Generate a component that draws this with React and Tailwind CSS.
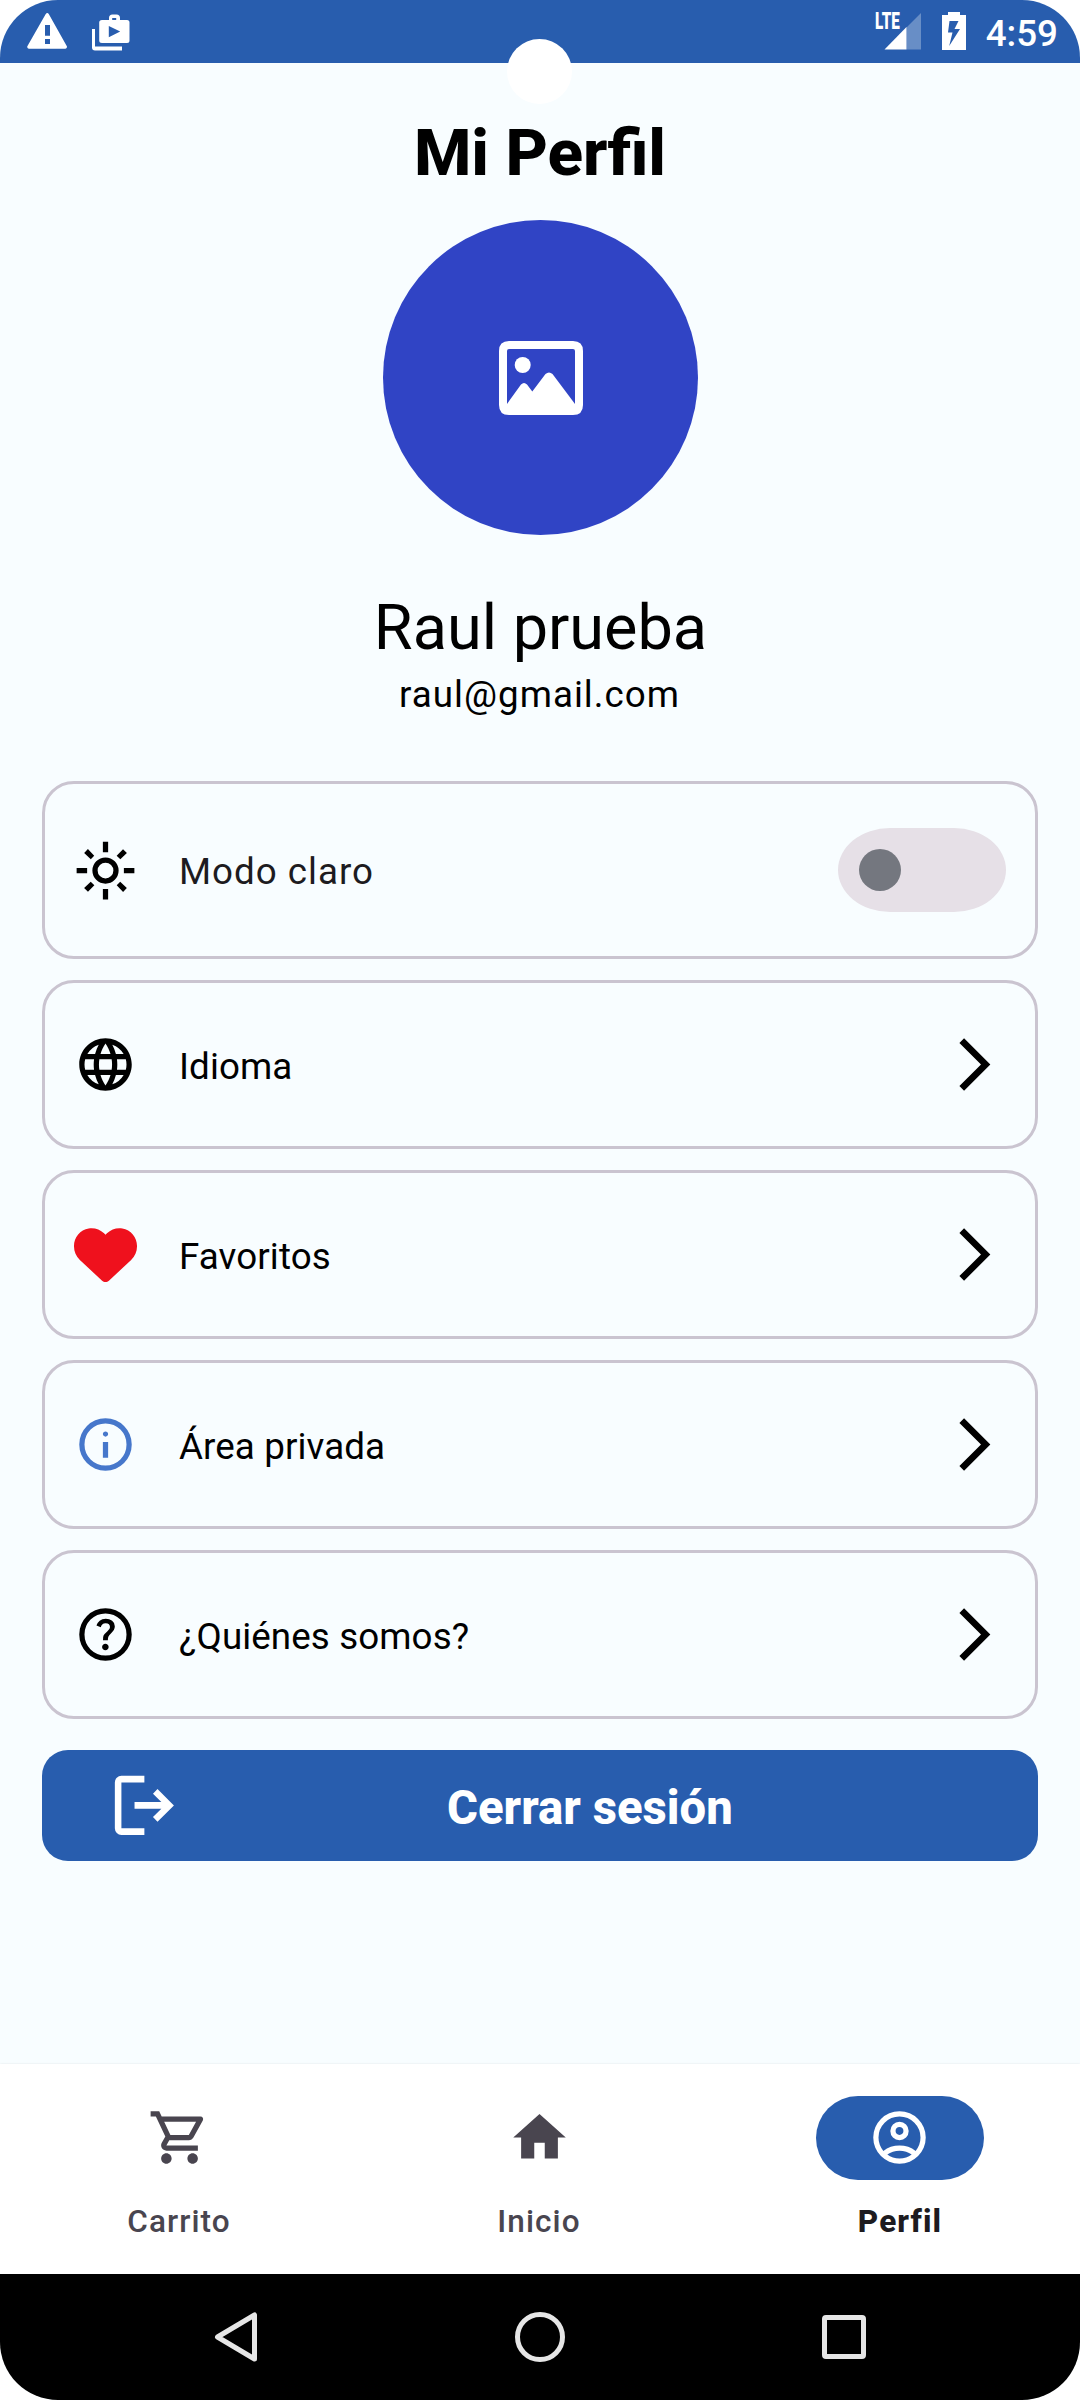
import React from "react";
import { MdLanguage, MdHome, MdOutlineShoppingCart } from "react-icons/md";
import { FaHeart } from "react-icons/fa6";

const PATHS = {
  sun: "M480-360q50 0 85-35t35-85-35-85-85-35-85 35-35 85 35 85 85 35Zm0 80q-83 0-141.5-58.5T280-480t58.5-141.5T480-680t141.5 58.5T680-480t-58.500 141.500T480-280ZM200-440H40v-80h160v80Zm720 0H760v-80h160v80ZM440-760v-160h80v160h-80Zm0 720v-160h80v160h-80ZM256-650l-101-97 57-59 96 100-52 56Zm492 496-97-101 53-55 101 97-57 59Zm-98-550 97-101 59 57-100 96-56-52ZM154-212l101-97 55 53-97 101-59-57Z",
  info: "M440-280h80v-240h-80v240Zm40-320q17 0 28.500-11.500T520-640q0-17-11.500-28.500T480-680q-17 0-28.500 11.500T440-640q0 17 11.500 28.500T480-600Zm0 520q-83 0-156-31.500T197-197q-54-54-85.500-127T80-480q0-83 31.500-156T197-763q54-54 127-85.500T480-880q83 0 156 31.500T763-763q54 54 85.500 127T880-480q0 83-31.500 156T763-197q-54 54-127 85.500T480-80Zm0-80q134 0 227-93t93-227q0-134-93-227t-227-93q-134 0-227 93t-93 227q0 134 93 227t227 93Z",
  help: "M478-240q21 0 35.500-14.500T528-290q0-21-14.500-35.500T478-340q-21 0-35.500 14.500T428-290q0 21 14.500 35.500T478-240Zm-36-154h74q0-33 7.500-52t42.500-52q26-26 41-49.500t15-56.500q0-56-41-86t-97-30q-57 0-92.500 30T342-618l66 26q5-18 22.500-39t53.500-21q32 0 48 17.500t16 38.500q0 20-12 37.500T506-526q-44 39-54 59t-10 73Zm38 314q-83 0-156-31.500T197-197q-54-54-85.500-127T80-480q0-83 31.500-156T197-763q54-54 127-85.500T480-880q83 0 156 31.500T763-763q54 54 85.500 127T880-480q0 83-31.500 156T763-197q-54 54-127 85.500T480-80Zm0-80q134 0 227-93t93-227q0-134-93-227t-227-93q-134 0-227 93t-93 227q0 134 93 227t227 93Z",
  chevron: "m321-80-71-71 329-329-329-329 71-71 400 400L321-80Z",
  logout: "M200-120q-33 0-56.500-23.500T120-200v-560q0-33 23.500-56.500T200-840h280v80H200v560h280v80H200Zm440-160-55-58 102-102H360v-80h327L585-622l55-58 200 200-200 200Z",
  account: "M234-276q51-39 114-61.500T480-360q69 0 132 22.500T726-276q35-41 54.500-93T800-480q0-133-93.500-226.500T480-800q-133 0-226.500 93.500T160-480q0 59 19.500 111t54.500 93Zm246-164q-59 0-99.500-40.500T340-580q0-59 40.500-99.500T480-720q59 0 99.500 40.500T620-580q0 59-40.500 99.500T480-440Zm0 360q-83 0-156-31.500T197-197q-54-54-85.500-127T80-480q0-83 31.500-156T197-763q54-54 127-85.500T480-880q83 0 156 31.500T763-763q54 54 85.500 127T880-480q0 83-31.500 156T763-197q-54 54-127 85.500T480-80Zm0-80q53 0 100-15.500t86-44.500q-39-29-86-44.500T480-280q-53 0-100 15.500T294-220q39 29 86 44.500T480-160Zm0-360q26 0 43-17t17-43q0-26-17-43t-43-17q-26 0-43 17t-17 43q0 26 17 43t43 17Z",
};

function Icon({ name, className = "size-[63px]" }) {
  return (
    <svg viewBox="0 -960 960 960" fill="currentColor" className={`shrink-0 ${className}`}>
      <path d={PATHS[name]} />
    </svg>
  );
}

function StatusBar() {
  return (
    <header className="relative flex h-[63px] shrink-0 items-start bg-[#285dae] text-white">
      <svg viewBox="0 0 42 38" className="ml-[26px] mt-[12px] h-[38px] w-[42px]">
        <path
          fill="currentColor"
          fillRule="evenodd"
          d="M19.6 2.2Q21.3 0 22.9 2.2L41 34.6Q41.2 36.7 39.4 36.7H2.8Q1 36.7 1.2 34.6ZM19 13V23.7H24V13ZM19 27V32H24V27Z"
        />
      </svg>
      <svg viewBox="0 0 40 38" className="ml-[23px] mt-[14px] h-[38px] w-[40px]" fill="currentColor">
        <path
          fillRule="evenodd"
          d="M18 6V4Q18 .5 21.500 .5H25.500Q29 .5 29 4V6H36Q38.500 6 38.500 8.500V26.500Q38.500 29 36 29H11Q8.200 29 8.200 26.500V8.500Q8.200 6 11 6ZM21.200 6H25.200V4H21.200ZM17.800 12V23.200L29.200 17.500Z"
        />
        <path d="M1 15H4V32.500H31V36.500H4Q1 36.500 1 33.500Z" />
      </svg>
      <div className="relative ml-auto mt-[13px] h-[37px] w-[46px]">
        <svg viewBox="0 0 46 37" className="size-full" fill="currentColor">
          <path opacity=".3" d="M46 0V36.500H31.500V14.500Z" />
          <path d="M31.500 14V36.500H9.500Z" />
        </svg>
        <span className="absolute top-[-3px] left-0 h-[23px] origin-left scale-x-[0.66] text-[23px] leading-[23px] font-black">
          LTE
        </span>
      </div>
      <svg viewBox="0 0 24 38" className="ml-[21px] mt-[12px] h-[38px] w-[24px]" fill="currentColor">
        <path
          fillRule="evenodd"
          d="M6 0H18V3H24V38H0V3H6ZM7.500 9L6 20.500H10.500L7.200 34L18 17H12.500L16.500 9Z"
        />
      </svg>
      <span className="ml-[20px] mr-[22px] mt-[12px] text-[36.75px] leading-[43px] font-medium">4:59</span>
      <div className="absolute left-[507px] top-[39px] z-10 size-[65px] rounded-full bg-white" />
    </header>
  );
}

function Avatar() {
  return (
    <div className="mt-[27px] flex size-[315px] items-center justify-center rounded-full bg-[#3044c5]">
      <svg viewBox="0 0 84 74" className="ml-[2px] h-[74px] w-[84px]" fill="white">
        <path
          fillRule="evenodd"
          d="M10 0H74Q84 0 84 10V64Q84 74 74 74H10Q0 74 0 64V10Q0 0 10 0ZM10 8Q8 8 8 10V63L22 43.500Q25 40.500 28 43.500L33.300 50.500L46.500 33Q50 30 53.500 33L76 63V10Q76 8 74 8Z"
        />
        <circle cx="23.700" cy="24" r="8" />
      </svg>
    </div>
  );
}

function Row({ icon, label }) {
  return (
    <button className="flex h-[169px] items-center rounded-[32px] border-3 border-[#cac4d0] pr-[29px] pl-[29px] text-left">
      {icon}
      <span className="ml-[42px] pt-[5px] text-[36.75px] leading-[52px] tracking-[0.1px]">{label}</span>
      <Icon name="chevron" className="ml-auto size-[63px]" />
    </button>
  );
}

function NavItem({ icon, label, active }) {
  return (
    <div className="flex flex-1 flex-col items-center pt-[32px]">
      <div
        className={`flex h-[84px] w-[168px] items-center justify-center rounded-full pr-[2px] pb-[1px] ${
          active ? "bg-[#285dae] text-white" : "text-[#49454f]"
        }`}
      >
        {icon}
      </div>
      <span
        className={`mt-[21px] text-[31.5px] leading-[42px] ${
          active ? "font-extrabold tracking-[1.1px] text-[#1d1b20]" : "pr-[2px] font-medium tracking-[1.1px] text-[#49454f]"
        }`}
      >
        {label}
      </span>
    </div>
  );
}

export default function App() {
  return (
    <div className="h-[2400px] w-[1080px] bg-white">
      <div className="flex h-full w-full flex-col overflow-hidden rounded-[58px] bg-[#f8fdff] font-['Roboto',sans-serif] text-black">
        <StatusBar />
        <main className="flex min-h-0 flex-1 flex-col items-center">
          <h1 className="mt-[50px] text-[65.6px] leading-[80px] font-extrabold">Mi Perfil</h1>
          <Avatar />
          <h2 className="mt-[57px] pl-[1px] text-[63px] leading-[72px]">Raul prueba</h2>
          <p className="mt-[5px] pr-[1px] text-[36.75px] leading-[52px] tracking-[1px]">raul@gmail.com</p>
          <div className="mt-[60px] flex w-[996px] flex-col gap-[21px]">
            <div className="flex h-[178px] items-center rounded-[32px] border-3 border-[#cac4d0] pr-[29px] pl-[29px]">
              <Icon name="sun" />
              <span className="ml-[42px] pt-[3px] text-[36.75px] leading-[52px] tracking-[1px] text-[#1d1b20]">
                Modo claro
              </span>
              <div className="ml-auto flex h-[84px] w-[168px] items-center rounded-[52px/42px] bg-[#e6e0e7] pl-[21px]">
                <div className="size-[42px] rounded-full bg-[#74777f]" />
              </div>
            </div>
            <Row icon={<MdLanguage className="size-[63px]" />} label="Idioma" />
            <Row icon={<FaHeart className="size-[63px] text-[#ef111d]" />} label="Favoritos" />
            <Row icon={<Icon name="info" className="size-[63px] text-[#4677cb]" />} label="Área privada" />
            <Row icon={<Icon name="help" />} label="¿Quiénes somos?" />
          </div>
          <button className="mt-[31px] flex h-[111px] w-[996px] items-center rounded-[26px] bg-[#285dae] pl-[63px] text-white">
            <Icon name="logout" className="size-[78.75px]" />
            <span className="flex-1 pt-[4px] pr-[42px] text-center text-[47.25px] leading-[60px] font-extrabold">
              Cerrar sesión
            </span>
          </button>
        </main>
        <nav className="flex h-[210px] shrink-0 bg-white shadow-[0_0_2px_rgba(0,0,0,0.1)]">
          <NavItem icon={<MdOutlineShoppingCart className="size-[63px]" />} label="Carrito" />
          <NavItem icon={<MdHome className="size-[63px]" />} label="Inicio" />
          <NavItem icon={<Icon name="account" />} label="Perfil" active />
        </nav>
        <footer className="flex h-[126px] shrink-0 items-center justify-between bg-black pr-[214px] pl-[214px]">
          <svg viewBox="0 0 44 50" className="h-[50px] w-[44px]" fill="none" stroke="#e6e6e6" strokeWidth="5" strokeLinejoin="round">
            <path d="M40.500 3V47L3.500 25Z" />
          </svg>
          <div className="size-[50px] rounded-full border-[5.5px] border-[#e6e6e6]" />
          <div className="size-[44px] rounded-[4px] border-5 border-[#e6e6e6]" />
        </footer>
      </div>
    </div>
  );
}
